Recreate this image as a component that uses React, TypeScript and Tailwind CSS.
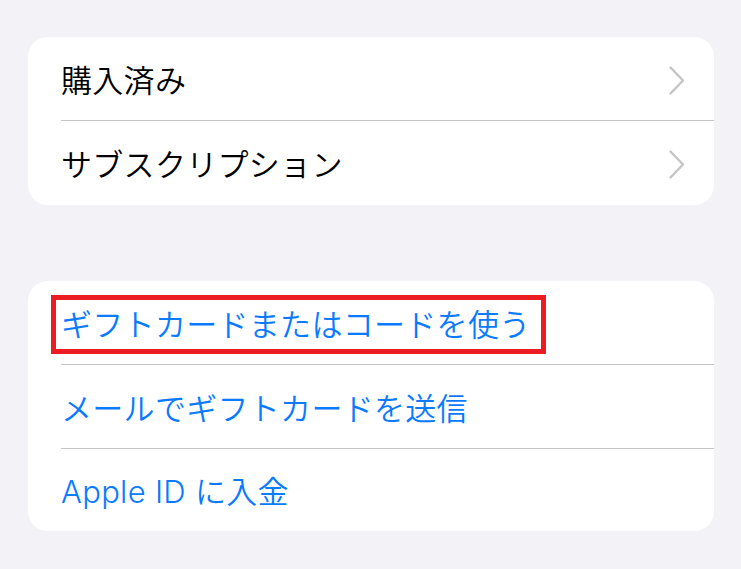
const font = { fontFamily: '"Inter", "Noto Sans CJK JP", sans-serif' }

function Chevron() {
  return (
    <svg width="18" height="31" viewBox="0 0 18 31" className="ml-auto -mr-[4px]" fill="none">
      <path d="M2.5 2.5 L15 15.5 L2.5 28.5" stroke="#c4c4c6" strokeWidth="2.4" strokeLinecap="round" strokeLinejoin="round" />
    </svg>
  )
}

function Row({ label, chevron, blue, boxed, last, short }: { label: string; chevron?: boolean; blue?: boolean; boxed?: boolean; last?: boolean; short?: boolean }) {
  return (
    <div className="pl-[33px]">
      <div className={`${short ? "h-[82px]" : "h-[84px]"} flex items-center pr-[32px] pt-[3px] ${last ? "" : "border-b border-[#c6c6c8]"}`}>
        <span className={`relative text-[31px] font-[350] leading-none tracking-[0.3px] ${blue ? "text-[#0a7aff]" : "text-black"}`}>
          {label}
          {boxed && <span className="absolute -left-[10px] -right-[15px] -top-[14px] -bottom-[14px] border-[5px] border-[#ec1c24]" />}
        </span>
        {chevron && <Chevron />}
      </div>
    </div>
  )
}

export default function App() {
  return (
    <div className="w-[741px] h-[569px] bg-[#f2f2f7] pt-[37px] px-[28px]" style={font}>
      <div className="bg-white rounded-[20px] w-[686px] overflow-hidden">
        <Row label="購入済み" chevron />
        <Row label="サブスクリプション" chevron last />
      </div>
      <div className="bg-white rounded-[20px] w-[686px] overflow-hidden mt-[76px]">
        <Row label="ギフトカードまたはコードを使う" blue boxed />
        <Row label="メールでギフトカードを送信" blue />
        <Row label="Apple ID に入金" blue last short />
      </div>
    </div>
  )
}
